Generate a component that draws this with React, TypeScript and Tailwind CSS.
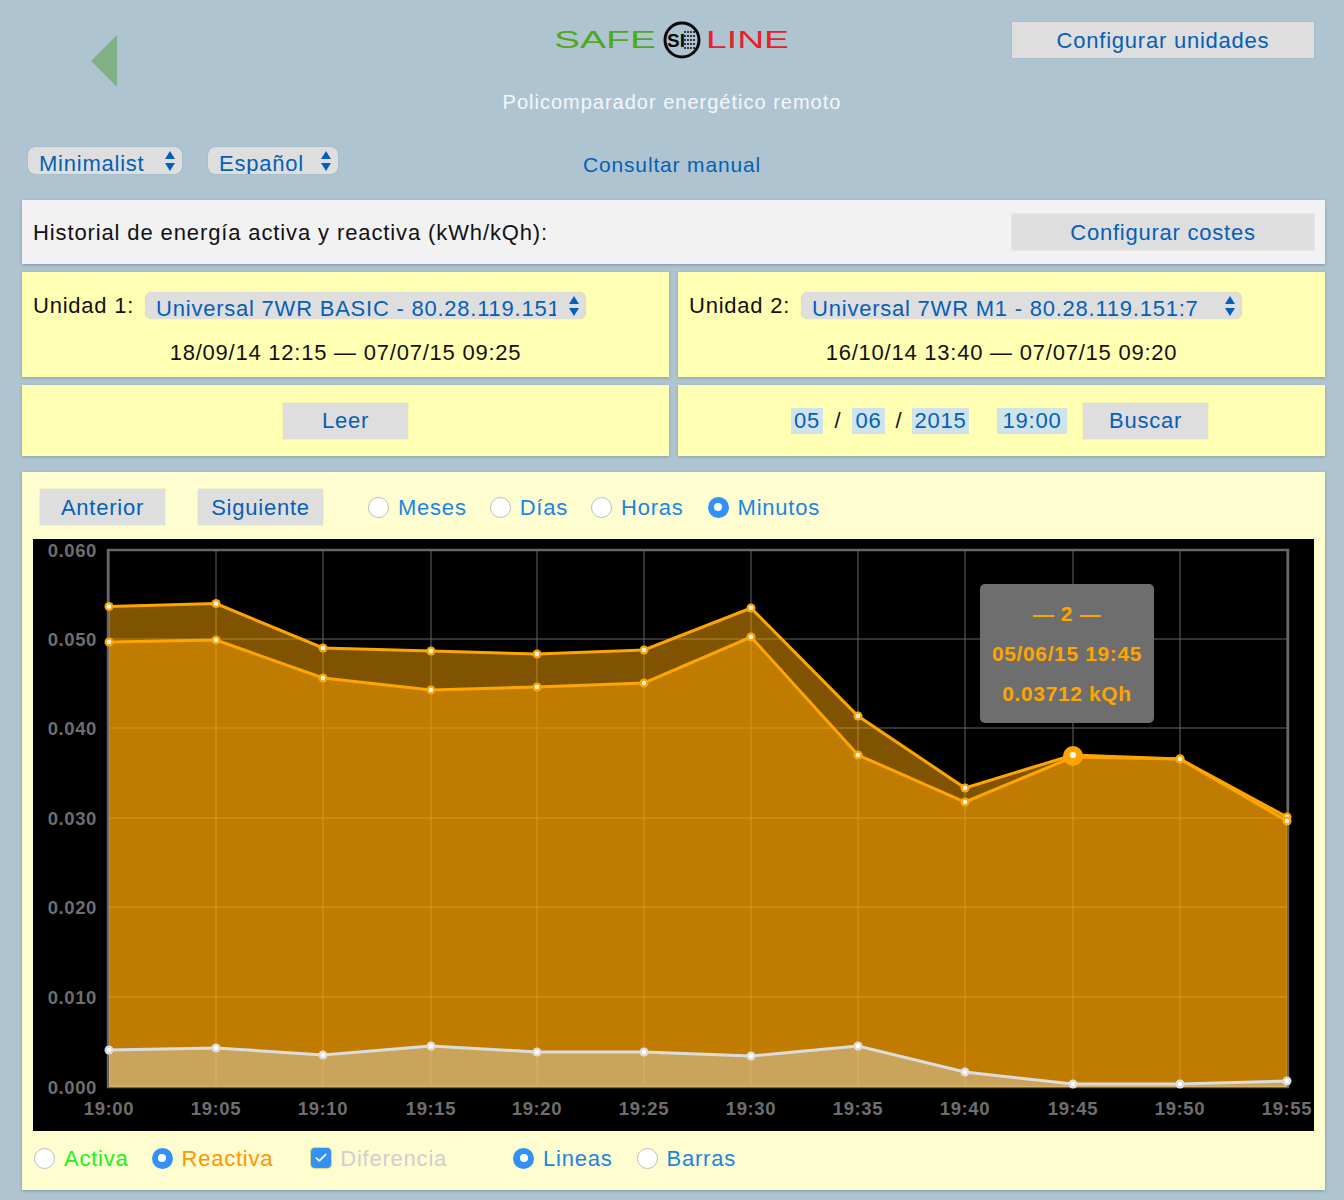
import React from "react";
import { Check } from "lucide-react";

const gridX = [109, 216, 323, 431, 537, 644, 751, 858, 965, 1073, 1180, 1287];
const gridY = [550, 639, 728, 818, 907, 997, 1087];
const yLabels = ["0.060", "0.050", "0.040", "0.030", "0.020", "0.010", "0.000"];
const times = ["19:00", "19:05", "19:10", "19:15", "19:20", "19:25", "19:30", "19:35", "19:40", "19:45", "19:50", "19:55"];
const upper = [606.5, 603.5, 648, 651, 654, 650, 608, 716, 788, 755, 759, 817];
const lower = [642, 640, 678, 690, 687, 683, 637, 755, 802, 757, 759, 821];
const diff = [1050, 1048, 1055, 1046, 1052, 1052, 1056, 1046, 1072, 1084, 1084, 1081];

const toLine = (ys: number[]) => ys.map((y, i) => `${gridX[i]},${y}`).join(" ");
const toArea = (ys: number[]) => `109,1087 ${toLine(ys)} 1287,1087`;

function Btn({ children, className = "" }: { children: React.ReactNode; className?: string }) {
  return (
    <button className={`h-[36px] bg-[#dedede] text-[#0560b5] text-[22px] tracking-[0.035em] shadow-[0_0_1px_rgba(0,0,0,0.25)] ${className}`}>
      {children}
    </button>
  );
}

function Arrows({ className = "" }: { className?: string }) {
  return (
    <svg width="10" height="20" viewBox="0 0 10 20" className={className}>
      <path d="M5 0 L10 8 H0 Z M0 12 H10 L5 20 Z" fill="#0560b5" />
    </svg>
  );
}

function Select({ value, width, options }: { value: string; width: string; options?: string[] }) {
  return (
    <span className={`relative inline-flex h-[27px] rounded-[7px] bg-[#dedede] shadow-[0_0_1px_rgba(0,0,0,0.3)] ${width}`}>
      <select
        defaultValue={value}
        className="h-full w-full appearance-none bg-transparent pl-[11px] pr-[30px] text-[22px] tracking-[0.035em] text-[#0560b5] outline-none"
      >
        {(options ?? [value]).map((o) => (
          <option key={o}>{o}</option>
        ))}
      </select>
      <Arrows className="absolute right-[7px] top-[4px]" />
    </span>
  );
}

function Radio({ on, label, color, className = "" }: { on?: boolean; label: string; color: string; className?: string }) {
  return (
    <span className={`flex items-center gap-[9px] text-[22px] tracking-[0.035em] ${color} ${className}`}>
      {on ? (
        <span className="flex h-[21px] w-[21px] items-center justify-center rounded-full bg-[#3390f5]">
          <span className="h-[8px] w-[8px] rounded-full bg-white" />
        </span>
      ) : (
        <span className="h-[21px] w-[21px] rounded-full border border-[#bdbdbd] bg-white" />
      )}
      {label}
    </span>
  );
}

function DateBox({ children, className }: { children: React.ReactNode; className: string }) {
  return (
    <span className={`flex h-[26px] items-center justify-center bg-[#cfe3ea] text-[22px] tracking-[0.035em] text-[#0560b5] ${className}`}>
      {children}
    </span>
  );
}

function Logo() {
  return (
    <svg width="236" height="40" viewBox="553 18 236 40">
      <text x="553" y="46" fontSize="23" textLength="102" lengthAdjust="spacingAndGlyphs" fill="#4fa81e" fontFamily="Liberation Sans, sans-serif">SAFE</text>
      <circle cx="681" cy="38" r="17" fill="none" stroke="#0a0a0a" strokeWidth="3" />
      <text x="666" y="45" fontSize="19" fontWeight="700" fill="#0a0a0a" fontFamily="Liberation Sans, sans-serif">SI</text>
      {[0, 1, 2, 3].map((c) =>
        [0, 1, 2, 3, 4].map((r) => (
          <circle key={`${c}-${r}`} cx={684 + c * 3} cy={30 + r * 4} r="1" fill="#0a0a0a" />
        ))
      )}
      <text x="705" y="46" fontSize="23" textLength="83" lengthAdjust="spacingAndGlyphs" fill="#e8202c" fontFamily="Liberation Sans, sans-serif">LINE</text>
    </svg>
  );
}

function Chart() {
  return (
    <div className="relative mx-[11px] mt-[14px] h-[592px] w-[1281px] bg-black">
      <svg width="1281" height="592" viewBox="33 539 1281 592" className="block" fontFamily="Liberation Sans, sans-serif">
        {gridX.map((x) => (
          <line key={x} x1={x} x2={x} y1="550" y2="1087" stroke="#666" strokeWidth="1" />
        ))}
        {gridY.map((y) => (
          <line key={y} x1="108" x2="1288" y1={y} y2={y} stroke="#666" strokeWidth="1" />
        ))}
        <rect x="108" y="550" width="1180" height="537" fill="none" stroke="#666" strokeWidth="2.5" />
        <polygon points={toArea(upper)} fill="#ffa500" fillOpacity="0.5" />
        <polygon points={toArea(lower)} fill="#ffa500" fillOpacity="0.5" />
        <polygon points={toArea(diff)} fill="#dcdcdc" fillOpacity="0.42" />
        <polyline points={toLine(upper)} fill="none" stroke="#ffa500" strokeWidth="3" />
        <polyline points={toLine(lower)} fill="none" stroke="#ffa500" strokeWidth="3" />
        <polyline points={toLine(diff)} fill="none" stroke="#dcdcdc" strokeWidth="3" />
        {[upper, lower].map((ys, s) =>
          ys.map((y, i) => (
            <g key={`${s}-${i}`}>
              <circle cx={gridX[i]} cy={y} r="4.5" fill="#ffa500" />
              <circle cx={gridX[i]} cy={y} r="2.2" fill="#fff" />
            </g>
          ))
        )}
        {diff.map((y, i) => (
          <g key={i}>
            <circle cx={gridX[i]} cy={y} r="4.5" fill="#dcdcdc" />
            <circle cx={gridX[i]} cy={y} r="2.2" fill="#fff" />
          </g>
        ))}
        <circle cx="1073" cy="756" r="10" fill="#ffa500" />
        <circle cx="1073" cy="755" r="3" fill="#fff" />
        {yLabels.map((l, i) => (
          <text key={l} x="97" y={gridY[i] + 7} textAnchor="end" fontSize="18.5" fontWeight="700" letterSpacing="0.6" fill="#6e6e6e">{l}</text>
        ))}
        {times.map((t, i) => (
          <text key={t} x={gridX[i]} y="1115" textAnchor="middle" fontSize="18.5" fontWeight="700" letterSpacing="0.6" fill="#6e6e6e">{t}</text>
        ))}
      </svg>
      <div className="absolute left-[947px] top-[45px] flex h-[139px] w-[174px] flex-col items-center justify-between rounded-[5px] bg-[#6e6e6e] py-[14px] text-[21px] font-bold tracking-[0.03em] text-[#ffa500]">
        <span>— 2 —</span>
        <span>05/06/15 19:45</span>
        <span>0.03712 kQh</span>
      </div>
    </div>
  );
}

export default function App() {
  return (
    <div
      className="h-[1200px] w-[1344px] overflow-hidden bg-[#aec5d1] text-[22px] text-[#111]"
      style={{ fontFamily: '"Liberation Sans", Arial, sans-serif' }}
    >
      <header className="grid h-[200px] grid-cols-3">
        <div>
          <svg width="26" height="52" viewBox="0 0 26 52" className="ml-[91px] mt-[35px] block">
            <polygon points="26,0 26,52 0,26" fill="#7fb185" />
          </svg>
          <div className="ml-[28px] mt-[60px] flex gap-[26px]">
            <Select value="Minimalist" width="w-[154px]" options={["Minimalist", "Classic"]} />
            <Select value="Español" width="w-[130px]" options={["Español", "English"]} />
          </div>
        </div>
        <div className="flex flex-col items-center pt-[20px]">
          <Logo />
          <p className="mt-[27px] text-[20px] leading-[30px] tracking-[0.05em] text-[#f4f7f8]">Policomparador energético remoto</p>
          <a className="mt-[33px] text-[21px] leading-[30px] tracking-[0.04em] text-[#0560b5]">Consultar manual</a>
        </div>
        <div className="pl-[116px] pt-[22px]">
          <Btn className="w-[302px]">Configurar unidades</Btn>
        </div>
      </header>

      <main className="flex w-[1303px] flex-col pl-0 ml-[22px]">
        <section className="flex h-[64px] items-center justify-between bg-[#f2f2f2] pl-[11px] pr-[11px] shadow-[0_1px_3px_rgba(0,0,0,0.25)]">
          <h1 className="font-normal tracking-[0.04em]">Historial de energía activa y reactiva (kWh/kQh):</h1>
          <Btn className="w-[302px]">Configurar costes</Btn>
        </section>

        <div className="mt-[8px] grid grid-cols-2 gap-x-[9px] gap-y-[8px]">
          <section className="h-[105px] bg-[#ffffb3] pl-[11px] pt-[17px] shadow-[0_1px_3px_rgba(0,0,0,0.2)]">
            <div className="flex items-center gap-[11px] tracking-[0.035em]">
              Unidad 1:
              <Select value="Universal 7WR BASIC - 80.28.119.151:7" width="w-[441px]" />
            </div>
            <p className="mt-[14px] pr-[11px] text-center tracking-[0.035em]">18/09/14 12:15 — 07/07/15 09:25</p>
          </section>
          <section className="h-[105px] bg-[#ffffb3] pl-[11px] pt-[17px] shadow-[0_1px_3px_rgba(0,0,0,0.2)]">
            <div className="flex items-center gap-[11px] tracking-[0.035em]">
              Unidad 2:
              <Select value="Universal 7WR M1 - 80.28.119.151:7" width="w-[441px]" />
            </div>
            <p className="mt-[14px] pr-[11px] text-center tracking-[0.035em]">16/10/14 13:40 — 07/07/15 09:20</p>
          </section>
          <section className="flex h-[71px] items-center justify-center bg-[#ffffb3] shadow-[0_1px_3px_rgba(0,0,0,0.2)]">
            <Btn className="w-[125px]">Leer</Btn>
          </section>
          <section className="flex h-[71px] items-center bg-[#ffffb3] pl-[113px] shadow-[0_1px_3px_rgba(0,0,0,0.2)]">
            <DateBox className="w-[32px]">05</DateBox>
            <span className="w-[29px] text-center">/</span>
            <DateBox className="w-[33px]">06</DateBox>
            <span className="w-[27px] text-center">/</span>
            <DateBox className="w-[57px]">2015</DateBox>
            <DateBox className="ml-[28px] w-[70px]">19:00</DateBox>
            <Btn className="ml-[16px] w-[125px]">Buscar</Btn>
          </section>
        </div>

        <section className="mt-[16px] h-[718px] bg-[#fefdd0] pt-[17px] shadow-[0_1px_3px_rgba(0,0,0,0.25)]">
          <div className="flex items-center pl-[18px]">
            <Btn className="w-[125px]">Anterior</Btn>
            <Btn className="ml-[33px] w-[125px]">Siguiente</Btn>
            <Radio label="Meses" color="text-[#1a85e6]" className="ml-[45px]" />
            <Radio label="Días" color="text-[#1a85e6]" className="ml-[23px]" />
            <Radio label="Horas" color="text-[#1a85e6]" className="ml-[23px]" />
            <Radio on label="Minutos" color="text-[#1a85e6]" className="ml-[24px]" />
          </div>
          <Chart />
          <div className="mt-[16px] flex h-[22px] items-center pl-[12px]">
            <Radio label="Activa" color="text-[#1ef01e]" />
            <Radio on label="Reactiva" color="text-[#ff9500]" className="ml-[23px]" />
            <span className="ml-[38px] flex items-center gap-[9px] tracking-[0.035em] text-[#cfcfcf]">
              <span className="flex h-[20px] w-[20px] items-center justify-center rounded-[4px] bg-[#3390f5] shadow-[0_0_0_1px_#cfe08a]">
                <Check size={14} color="#fff" strokeWidth={3} />
              </span>
              Diferencia
            </span>
            <Radio on label="Lineas" color="text-[#1a85e6]" className="ml-[66px]" />
            <Radio label="Barras" color="text-[#1a85e6]" className="ml-[24px]" />
          </div>
        </section>
      </main>
    </div>
  );
}
